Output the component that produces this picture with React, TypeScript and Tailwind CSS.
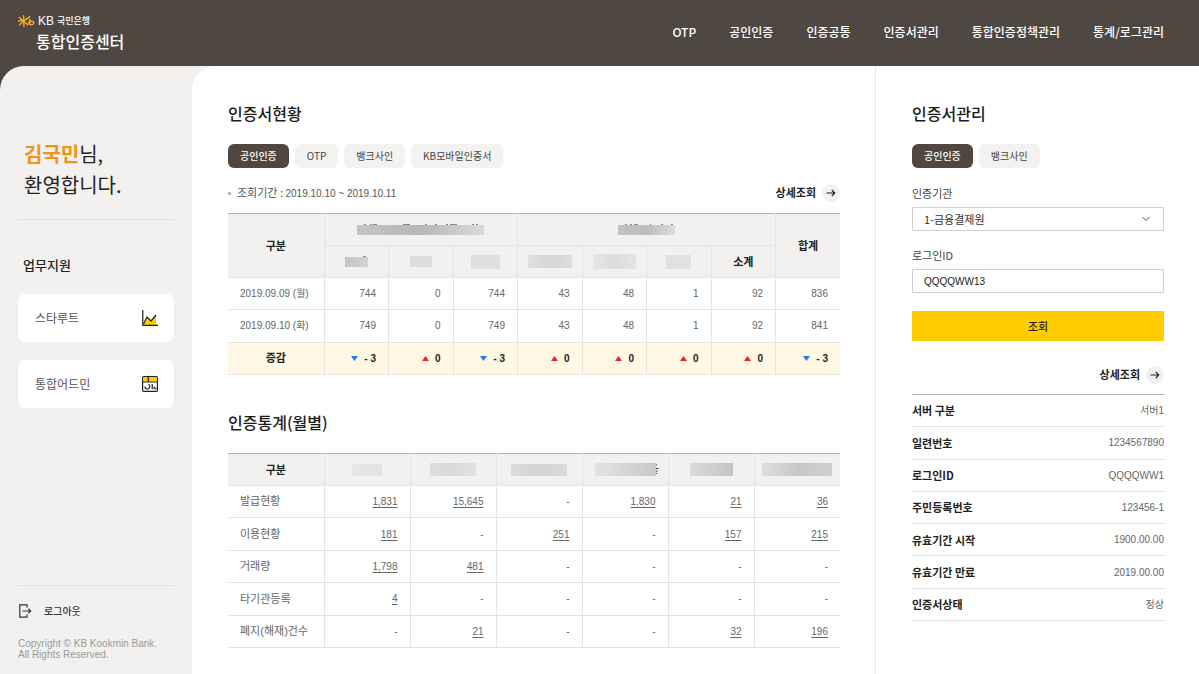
import type { ReactNode } from "react";

const NAV = ["OTP", "공인인증", "인증공통", "인증서관리", "통합인증정책관리", "통계/로그관리"];

const DAILY = [
  { date: "2019.09.09 (월)", values: [744, 0, 744, 43, 48, 1, 92, 836] },
  { date: "2019.09.10 (화)", values: [749, 0, 749, 43, 48, 1, 92, 841] },
];

const CHANGES = [-3, 0, -3, 0, 0, 0, 0, -3];

const MONTHLY = [
  { name: "발급현황", values: ["1,831", "15,645", "-", "1,830", "21", "36"] },
  { name: "이용현황", values: ["181", "-", "251", "-", "157", "215"] },
  { name: "거래량", values: ["1,798", "481", "-", "-", "-", "-"] },
  { name: "타기관등록", values: ["4", "-", "-", "-", "-", "-"] },
  { name: "폐지(해재)건수", values: ["-", "21", "-", "-", "32", "196"] },
];

const DETAILS = [
  ["서버 구분", "서버1"],
  ["일련번호", "1234567890"],
  ["로그인ID", "QQQQWW1"],
  ["주민등록번호", "123456-1"],
  ["유효기간 시작", "1900.00.00"],
  ["유효기간 만료", "2019.00.00"],
  ["인증서상태", "정상"],
];

const NUM = "font-['Liberation_Sans','Noto_Sans_CJK_KR',sans-serif] text-[10px]";

function Logo() {
  return (
    <svg width="17" height="12" viewBox="0 0 17 12" fill="none" stroke="#f5a81c" strokeLinecap="round" aria-hidden="true">
      <path d="M5.6.6 5.9 11.4" strokeWidth="1.4" />
      <path d="M1.4 2.6 9.6 9.6" strokeWidth="1.5" />
      <path d="M.6 6.1C4 6 8.500 4.600 11.800 1.600" strokeWidth="1.500" />
      <path d="M1.800 9.800 5.800 5.800" strokeWidth="1.400" />
      <path d="M12 4.600 10.800 8.400C11.800 10.400 15.800 9.800 15.900 7.800 15.900 6 12.900 5.900 11.900 7.400" strokeWidth="1.500" />
    </svg>
  );
}

function ChartIcon() {
  return (
    <svg width="16" height="16" viewBox="0 0 16 16" fill="none" aria-hidden="true">
      <path d="M1.500 15 5 7l4 4 5-6v10Z" fill="#fc0" />
      <path d="M.8 0v15.300H16" stroke="#222" strokeWidth="1.200" />
      <path d="M1.500 14 5 7l4 4 5-6" stroke="#222" strokeWidth="1.200" />
    </svg>
  );
}

function BoardIcon() {
  return (
    <svg width="16" height="16" viewBox="0 0 16 16" fill="none" stroke="#222" aria-hidden="true">
      <rect x=".6" y=".6" width="14.800" height="14.800" rx="1" fill="#fff" strokeWidth="1.200" />
      <path d="M1.200 1.200h13.600v4.300H1.200Z" fill="#fc0" stroke="none" />
      <path d="M.6 6h14.800M6.300.6V6" strokeWidth="1.200" />
      <path d="M6.500 8.300A2.500 2.500 0 1 1 2.800 10.600M10.200 8v5.200M12.200 10.600v2.600M13.800 11.800v1.400" strokeWidth="1.200" />
    </svg>
  );
}

function LogoutIcon() {
  return (
    <svg width="14" height="14" viewBox="0 0 14 14" fill="none" stroke="#333" strokeWidth="1.200" aria-hidden="true">
      <path d="M9 3.500V.8H1.800v12.400H9v-2.700M4.600 7h8" />
      <path d="m10.300 4.700 2.400 2.300-2.400 2.300" />
    </svg>
  );
}

function Title({ children }: { children: ReactNode }) {
  return <h2 className="text-base leading-6 font-medium text-[#1c1c1c]">{children}</h2>;
}

function Tabs({ items }: { items: string[] }) {
  return (
    <div className="mt-[19px] flex gap-1.5">
      {items.map((item, i) => (
        <button
          key={item}
          type="button"
          className={
            i === 0
              ? "h-6 rounded-md bg-[#4f4740] px-3 pb-0.5 text-[10px] font-medium text-white"
              : "h-6 rounded-md bg-[#f3f2f1] px-3 pb-0.5 text-[10px] text-[#444]"
          }
        >
          {item}
        </button>
      ))}
    </div>
  );
}

function DetailLink() {
  return (
    <a href="#detail" className="flex h-[18px] items-center gap-1.5 text-[11px] leading-4 font-bold text-[#222]">
      <span className="pb-0.5">상세조회</span>
      <span className="flex size-[18px] items-center justify-center rounded-full bg-[#f3f1ef]">
        <svg width="10" height="8" viewBox="0 0 10 8" fill="none" stroke="#222" strokeWidth="1.100" aria-hidden="true">
          <path d="M.5 4h8.300M5.800 1l3 3-3 3" />
        </svg>
      </span>
    </a>
  );
}

function Mask({ className, children }: { className: string; children?: ReactNode }) {
  return <span className={`relative mx-auto block ${className}`}>{children}</span>;
}

function Ticks({ d, width }: { d: string; width: number }) {
  return (
    <svg className="absolute -top-px left-0" width={width} height="1" viewBox={`0 0 ${width} 1`} aria-hidden="true">
      <path d={d} stroke="#888" strokeWidth="1" />
    </svg>
  );
}

function Change({ value }: { value: number }) {
  return (
    <span className="inline-flex items-center gap-1.5">
      <svg width="7" height="5" viewBox="0 0 7 5" aria-hidden="true">
        {value < 0 ? <path d="M0 0h7L3.500 5Z" fill="#2f75ee" /> : <path d="M0 5h7L3.500 0Z" fill="#e8242b" />}
      </svg>
      {value < 0 ? `- ${-value}` : value}
    </span>
  );
}

const HEAD = "border-b border-l border-[#e6e4e2] p-0 text-center text-[11px] font-bold text-[#222]";
const CELL = "border-b border-l border-[#e6e4e2] py-0 pr-3 pl-0 text-right";

export default function App() {
  return (
    <div className="flex min-h-screen flex-col bg-[#4f4741] font-['Noto_Sans_CJK_KR',sans-serif]">
      <header className="flex h-[66px] shrink-0 items-center justify-between pr-[35px] pl-[18px] text-white">
        <a href="#home" className="block">
          <span className="flex items-center gap-[3px] leading-4">
            <Logo />
            <span className="font-['Liberation_Sans',sans-serif] text-xs leading-4">KB</span>
            <span className="text-[9px] font-medium">국민은행</span>
          </span>
          <span className="block pl-[18px] text-base leading-6 font-medium">통합인증센터</span>
        </a>
        <nav className="flex gap-[33px] pb-0.5 text-xs font-medium">
          {NAV.map((item) => (
            <a key={item} href="#menu">
              {item}
            </a>
          ))}
        </nav>
      </header>

      <div className="flex flex-1 overflow-hidden rounded-tl-3xl bg-[#f2f1ef]">
        <aside className="flex w-48 shrink-0 flex-col px-[18px] pt-[72px] pb-3.5">
          <p className="pl-1.5 text-xl leading-[31px] text-[#222]">
            <strong className="font-bold text-[#f29318]">김국민</strong>님,
            <br />
            환영합니다.
          </p>
          <hr className="mt-[19px] border-[#e3e1df]" />
          <h2 className="mt-[35px] pl-[5px] text-[13px] leading-5 font-medium text-[#222]">업무지원</h2>
          <div className="mt-[19px] flex flex-col gap-[18px]">
            <a href="#starroute" className="flex h-12 items-center justify-between rounded-lg bg-white pr-4 pl-[17px] text-xs text-[#555]">
              스타루트
              <ChartIcon />
            </a>
            <a href="#admin" className="flex h-12 items-center justify-between rounded-lg bg-white pr-4 pl-[17px] text-xs text-[#555]">
              통합어드민
              <BoardIcon />
            </a>
          </div>
          <div className="mt-auto border-t border-[#e3e1df] pt-4">
            <button type="button" className="flex items-center gap-3 text-[10px] leading-[18px] font-medium text-[#333]">
              <LogoutIcon />
              로그아웃
            </button>
            <p className="mt-[18px] font-['Liberation_Sans',sans-serif] text-[10px] leading-[11px] whitespace-nowrap text-[#999]">
              Copyright © KB Kookmin Bank.
              <br />
              All Rights Reserved.
            </p>
          </div>
        </aside>

        <main className="min-w-0 flex-1 rounded-tl-3xl bg-white pt-[35px] pr-[35px] pb-6 pl-9">
          <Title>인증서현황</Title>
          <Tabs items={["공인인증", "OTP", "뱅크사인", "KB모바일인증서"]} />
          <div className="mt-4 flex h-[18px] items-center justify-between">
            <p className="flex items-center gap-1.5 text-[11px] leading-[18px] text-[#555]">
              <span className="size-[3px] rounded-full bg-[#b5a28c]" />
              <span>
                조회기간 : <span className={NUM}>2019.10.10 ~ 2019.10.11</span>
              </span>
            </p>
            <DetailLink />
          </div>

          <table className="mt-[11px] h-[162px] w-full table-fixed border-collapse border-t border-[#b6b0a4] text-[#666]">
            <colgroup>
              <col className="w-24" />
              <col span={8} />
            </colgroup>
            <thead className="bg-[#f2f1ef]">
              <tr className="h-8">
                <th rowSpan={2} className="border-b border-[#e6e4e2] p-0 text-center text-[11px] font-bold text-[#222]">
                  구분
                </th>
                <th colSpan={3} className={HEAD}>
                  <Mask className="h-2.5 w-[127px] bg-linear-to-r from-[#c4c4c4] via-[#b6b6b6] to-[#dadada]">
                    <Ticks width={127} d="M7 .5h2M13 .5h2M16 .5h4M46 .5h7M68 .5h2M78 .5h2M89 .5h2M93 .5h7M115 .5h2M119 .5h2" />
                  </Mask>
                </th>
                <th colSpan={4} className={HEAD}>
                  <Mask className="h-2.5 w-[57px] bg-linear-to-r from-[#c2c2c2] via-[#bcbcbc] to-[#dcdcdc]">
                    <Ticks width={57} d="M7 .5h2M12 .5h2M16 .5h4M32 .5h1M43 .5h2M53 .5h2" />
                  </Mask>
                </th>
                <th rowSpan={2} className={HEAD}>
                  합계
                </th>
              </tr>
              <tr className="h-8">
                <th className={HEAD}>
                  <Mask className="h-2.5 w-[23px] bg-linear-to-r from-[#c4c4c4] to-[#d2d2d2]">
                    <Ticks width={23} d="M18 .5h3" />
                  </Mask>
                </th>
                <th className={HEAD}><Mask className="h-[11px] w-[22px] bg-[#dddddc]" /></th>
                <th className={HEAD}><Mask className="h-3.5 w-[29px] bg-[#e0e0df]" /></th>
                <th className={HEAD}><Mask className="h-[13px] w-11 bg-linear-to-r from-[#e0e0df] via-[#d5d5d4] to-[#dddddc]" /></th>
                <th className={HEAD}><Mask className="h-[15px] w-[43px] bg-linear-to-r from-[#e6e6e5] via-[#dcdcdb] to-[#e4e4e3]" /></th>
                <th className={HEAD}><Mask className="h-3.5 w-[25px] bg-[#e1e1e0]" /></th>
                <th className={HEAD}>소계</th>
              </tr>
            </thead>
            <tbody className={NUM}>
              {DAILY.map((row) => (
                <tr key={row.date} className="h-8">
                  <th scope="row" className="border-b border-[#e6e4e2] py-0 pr-0 pl-3 text-left font-normal whitespace-nowrap">
                    {row.date}
                  </th>
                  {row.values.map((value, i) => (
                    <td key={i} className={CELL}>
                      {value}
                    </td>
                  ))}
                </tr>
              ))}
              <tr className="h-8 bg-[#fef8e5] font-bold text-[#222]">
                <th scope="row" className="border-b border-[#e6e4e2] p-0 text-center text-[11px]">
                  증감
                </th>
                {CHANGES.map((value, i) => (
                  <td key={i} className={CELL}>
                    <Change value={value} />
                  </td>
                ))}
              </tr>
            </tbody>
          </table>

          <div className="mt-[35px]">
            <Title>인증통계(월별)</Title>
          </div>
          <table className="mt-[19px] h-[195px] w-full table-fixed border-collapse border-t border-[#b6b0a4] text-[#666]">
            <colgroup>
              <col className="w-24" />
              <col span={6} />
            </colgroup>
            <thead className="bg-[#f2f1ef]">
              <tr className="h-8">
                <th className="border-b border-[#e6e4e2] p-0 text-center text-[11px] font-bold text-[#222]">구분</th>
                <th className={HEAD}><Mask className="h-3 w-[30px] bg-linear-to-r from-[#e6e6e5] to-[#e2e2e1]" /></th>
                <th className={HEAD}><Mask className="h-[13px] w-[46px] bg-linear-to-r from-[#dededd] via-[#d9d9d8] to-[#e2e2e1]" /></th>
                <th className={HEAD}><Mask className="h-3 w-14 bg-linear-to-r from-[#dcdcdb] via-[#d4d4d3] to-[#dadad9]" /></th>
                <th className={HEAD}>
                  <Mask className="h-[13px] w-[61px] bg-linear-to-r from-[#e2e2e1] via-[#d6d6d5] to-[#c8c8c8]">
                    <svg className="absolute top-0 left-full" width="3" height="12" viewBox="0 0 3 12" aria-hidden="true">
                      <path d="M0 2h1M0 5.500h2.500M0 8h1.500M0 10.500h1" stroke="#333" />
                    </svg>
                  </Mask>
                </th>
                <th className={HEAD}><Mask className="h-[13px] w-[43px] bg-linear-to-r from-[#dadad9] to-[#c4c4c4]" /></th>
                <th className={HEAD}><Mask className="h-[13px] w-[70px] bg-linear-to-r from-[#dededd] via-[#c8c8c8] to-[#cfcfce]" /></th>
              </tr>
            </thead>
            <tbody className={NUM}>
              {MONTHLY.map((row) => (
                <tr key={row.name} className="h-8">
                  <th scope="row" className="border-b border-[#e6e4e2] py-0 pr-0 pl-3 text-left text-[11px] font-normal whitespace-nowrap">
                    {row.name}
                  </th>
                  {row.values.map((value, i) => (
                    <td key={i} className={CELL}>
                      {value === "-" ? (
                        value
                      ) : (
                        <a href="#stat" className="underline underline-offset-2">
                          {value}
                        </a>
                      )}
                    </td>
                  ))}
                </tr>
              ))}
            </tbody>
          </table>
        </main>

        <section className="w-[324px] shrink-0 border-l border-[#e8e8e8] bg-white pt-[35px] pr-[35px] pb-6 pl-9">
          <Title>인증서관리</Title>
          <Tabs items={["공인인증", "뱅크사인"]} />
          <form>
            <label htmlFor="agency" className="mt-[17px] block text-[11px] leading-4 text-[#444]">
              인증기관
            </label>
            <div className="relative mt-1.5">
              <select id="agency" className="block h-6 w-full appearance-none rounded-[1px] border border-[#d0d0d0] bg-white px-[11px] text-[11px] text-[#333]">
                <option>1-금융결제원</option>
              </select>
              <svg className="pointer-events-none absolute top-2 right-3.5" width="8" height="8" viewBox="0 0 8 8" fill="none" stroke="#555" aria-hidden="true">
                <path d="m.5 2 3.500 3.500L7.500 2" />
              </svg>
            </div>
            <label htmlFor="login" className="mt-4 block text-[11px] leading-4 text-[#444]">
              로그인ID
            </label>
            <input
              id="login"
              type="text"
              defaultValue="QQQQWW13"
              className="mt-1.5 block h-6 w-full rounded-[1px] border border-[#d0d0d0] bg-white px-[11px] font-['Liberation_Sans',sans-serif] text-[10px] text-[#222]"
            />
            <button type="button" className="mt-[18px] block h-[30px] w-full rounded-[1px] bg-[#ffcc00] text-[11px] font-medium text-[#222]">
              조회
            </button>
          </form>
          <div className="mt-[25px] flex justify-end">
            <DetailLink />
          </div>
          <table className="mt-2.5 h-[227px] w-full border-collapse border-t border-[#b6b0a4]">
            <tbody>
              {DETAILS.map(([name, value]) => (
                <tr key={name} className="border-b border-[#e6e4e2]">
                  <th scope="row" className="p-0 text-left text-[11px] font-bold text-[#222]">
                    {name}
                  </th>
                  <td className={`${NUM} p-0 text-right text-[#666]`}>{value}</td>
                </tr>
              ))}
            </tbody>
          </table>
        </section>
      </div>
    </div>
  );
}
